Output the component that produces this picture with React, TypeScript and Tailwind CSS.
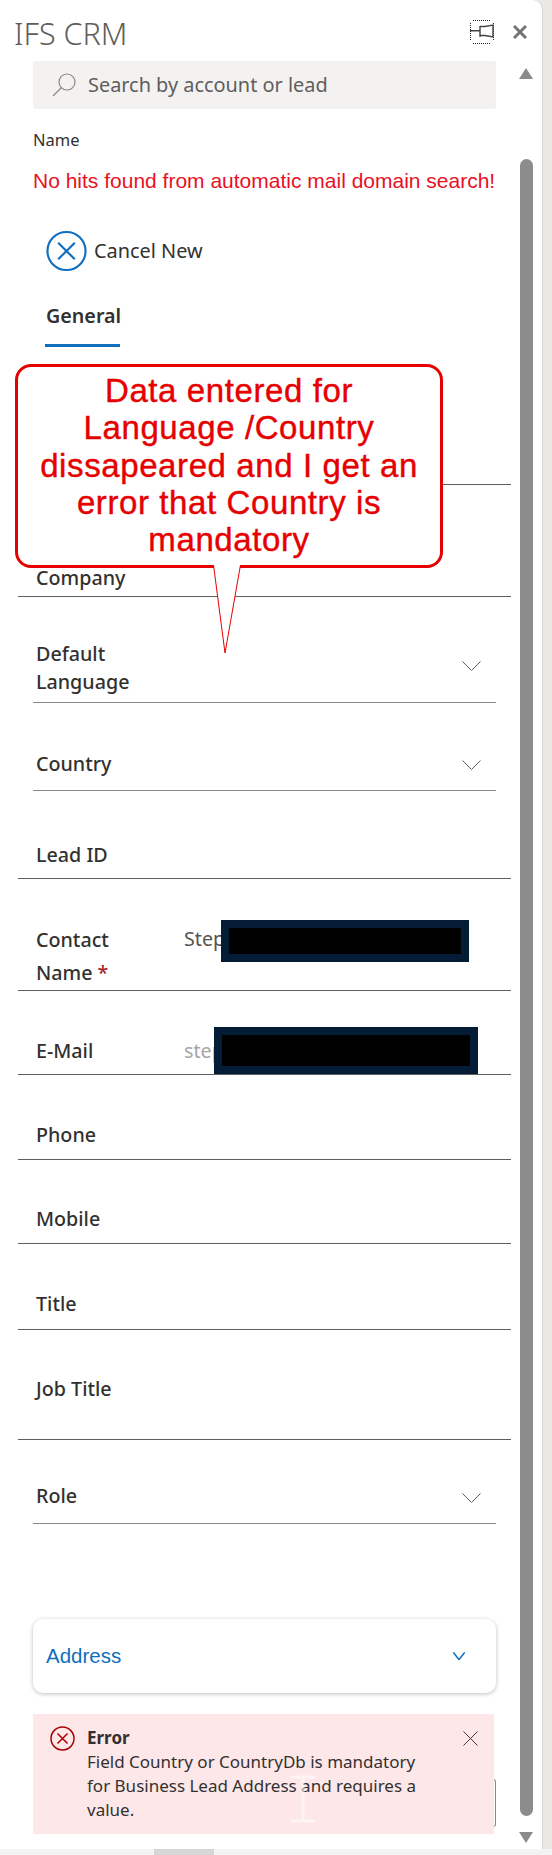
import type { ReactNode } from 'react'

function Chevron({ className, weight = 1 }: { className: string; weight?: number }) {
  return (
    <svg viewBox="0 0 19 10" preserveAspectRatio="none" className={className} fill="none" stroke="currentColor" strokeWidth={weight}>
      <path d="M0.5 0.5l9 9 9-9" />
    </svg>
  )
}

// underlined text field, full width
function Row({
  height,
  pad,
  label,
  children,
}: {
  height: string
  pad: string
  label?: ReactNode
  children?: ReactNode
}) {
  return (
    <div className={`${height} ml-[18px] flex w-[493px] items-end border-b border-[#605e5c] pl-[18px]`}>
      <div className={`${pad} w-[148px] shrink-0 text-[19.7px] leading-[28px] font-medium text-[#323130]`}>{label}</div>
      {children}
    </div>
  )
}

// dropdown field, a bit narrower than the text rows
function SelectRow({
  height,
  pad,
  chevron,
  label,
}: {
  height: string
  pad: string
  chevron: string
  label: ReactNode
}) {
  return (
    <div className={`${height} ml-[33px] flex w-[463px] items-end border-b border-[#8a8886] pl-[3px]`}>
      <div className={`${pad} text-[19.7px] leading-[28px] font-medium text-[#323130]`}>{label}</div>
      <Chevron className={`${chevron} mr-[15px] ml-auto h-[10px] w-[19px] text-[#605e5c]`} />
    </div>
  )
}

function Redacted({ className }: { className: string }) {
  return <div className={`absolute border-[8px] border-[#041c36] bg-black ${className}`} />
}

export default function App() {
  return (
    <div className='relative h-[1855px] w-[552px] overflow-hidden bg-[#ebe8e4] font-["Noto_Sans","Open_Sans",sans-serif]'>
      <div className="h-[1849px] w-[543px] rounded-tr-[10px] border-r border-[#d8d6d4] bg-white">
        <div className="flex h-[61px] items-start justify-between pt-[20px] pr-[15px] pl-[14px]">
          <span className="-mt-[3px] text-[30.5px] leading-[32px] font-light text-[#605e5c]">IFS CRM</span>
          <div className="flex items-start gap-[19px]">
            <svg viewBox="0 0 24 24" className="h-[24px] w-[24px]" fill="none">
              <path d="M3 0.5h17M3 23.5h17M0.5 3v18M23.5 3v18" stroke="#222" strokeDasharray="1 1" />
              <path d="M0 10.8h10M10 6v11M10 6.5h5l8-1.5v12l-8-1.5h-5" stroke="#444" strokeWidth="1.4" />
            </svg>
            <svg viewBox="0 0 14 14" className="mt-[5px] h-[14px] w-[14px]" stroke="#737373" strokeWidth="3">
              <path d="M1 1l12 12M13 1L1 13" />
            </svg>
          </div>
        </div>

        <div className="ml-[33px] flex h-[48px] w-[463px] items-center rounded-[2px] bg-[#f3f2f1] pl-[19px]">
          <svg viewBox="0 0 24 24" className="h-[24px] w-[24px]" fill="none" stroke="#8a8886" strokeWidth="1.2">
            <circle cx="15" cy="9" r="8" />
            <path d="M9.5 14.5L1 23" />
          </svg>
          <span className="ml-[12px] text-[19.9px] text-[#605e5c]">Search by account or lead</span>
        </div>

        <div className="mt-[21px] ml-[33px] text-[16.5px] leading-[20px] text-[#323130]">Name</div>
        <div className="mt-[19px] ml-[33px] font-['Liberation_Sans',sans-serif] text-[21px] leading-[24px] whitespace-nowrap text-[#e81123]">
          No hits found from automatic mail domain search!
        </div>

        <div className="mt-[37px] ml-[46px] flex items-center gap-[7px]">
          <svg viewBox="0 0 42 42" className="h-[42px] w-[41px]" fill="none" stroke="#106ebe" strokeWidth="2.2">
            <circle cx="21" cy="21" r="19.5" />
            <path d="M12.5 12.5l17 17M29.5 12.5l-17 17" />
          </svg>
          <span className="text-[19.9px] text-[#323130]">Cancel New</span>
        </div>

        <div className="mt-[30px] ml-[45px] w-[75px] border-b-[3px] border-[#106ebe] pb-[14px] pl-[1px] text-[19.7px] leading-[28px] font-semibold whitespace-nowrap text-[#323130]">
          General
        </div>

        <Row height="h-[138px]" pad="pb-[4px]" />
        <Row height="h-[112px]" pad="pb-[4px]" label="Company" />
        <SelectRow
          height="h-[106px]"
          pad="pb-[6px]"
          chevron="mb-[31px]"
          label={
            <>
              Default
              <br />
              Language
            </>
          }
        />
        <SelectRow height="h-[88px]" pad="pb-[12px]" chevron="mb-[20px]" label="Country" />
        <Row height="h-[88px]" pad="pb-[9px]" label="Lead ID" />
        <Row
          height="h-[112px]"
          pad="pb-[1px] leading-[33px]"
          label={
            <>
              Contact
              <br />
              Name <span className="text-[#a4262c]">*</span>
            </>
          }
        >
          <span className="pb-[37px] text-[19.7px] leading-[28px] text-[#555352]">Step</span>
        </Row>
        <Row height="h-[84px]" pad="pb-[9px]" label="E-Mail">
          <span className="pb-[9px] text-[19.7px] leading-[28px] text-[#a6a6a6]">step</span>
        </Row>
        <Row height="h-[85px]" pad="pb-[10px]" label="Phone" />
        <Row height="h-[84px]" pad="pb-[10px]" label="Mobile" />
        <Row height="h-[86px]" pad="pb-[11px]" label="Title" />
        <Row height="h-[110px]" pad="pb-[36px]" label="Job Title" />
        <SelectRow height="h-[84px]" pad="pb-[13px]" chevron="mb-[20px]" label="Role" />

        <div className="mt-[95px] ml-[33px] flex h-[74px] w-[463px] items-center justify-between rounded-[10px] bg-white pr-[31px] pl-[13px] shadow-[0_1px_4px_rgba(0,0,0,0.25)]">
          <span className="font-['Liberation_Sans',sans-serif] text-[20.5px] text-[#106ebe]">Address</span>
          <Chevron className="h-[8px] w-[12px] text-[#106ebe]" weight={2.2} />
        </div>
      </div>

      {/* scrollbar */}
      <div className="absolute top-[68px] left-[519px] h-0 w-0 border-x-[7.5px] border-b-[11px] border-x-transparent border-b-[#8a8a8a]" />
      <div className="absolute top-[159px] left-[520px] h-[1657px] w-[13px] rounded-full bg-[#8c8c8c]" />
      <div className="absolute top-[1832px] left-[519px] h-0 w-0 border-x-[7.5px] border-t-[11px] border-x-transparent border-t-[#8a8a8a]" />

      {/* redactions */}
      <Redacted className="top-[920px] left-[221px] h-[42px] w-[248px]" />
      <Redacted className="top-[1027px] left-[214px] h-[47px] w-[264px]" />

      {/* edge of whatever sits under the toast */}
      <div className="absolute top-[1779px] left-[490px] h-[48px] w-[6px] rounded-r-[3px] border-y border-r border-[#8a8886]" />

      {/* error toast */}
      <div className="absolute top-[1714px] left-[33px] flex h-[120px] w-[461px] bg-[#fde7e9] pt-[12px] pr-[16px] pl-[17px]">
        <svg viewBox="0 0 25 25" className="h-[25px] w-[25px] shrink-0" fill="none" stroke="#a80000" strokeWidth="1.5">
          <circle cx="12.5" cy="12.5" r="11.5" />
          <path d="M7.5 7.5l10 10M17.5 7.5l-10 10" />
        </svg>
        <div className="ml-[12px] w-[345px] text-[17px] leading-[24px] text-[#323130]">
          <div className="font-bold">Error</div>
          Field Country or CountryDb is mandatory for Business Lead Address and requires a value.
        </div>
        <svg viewBox="0 0 16 16" className="mt-[5px] ml-auto h-[15px] w-[15px]" stroke="#323130" strokeWidth="1">
          <path d="M0.5 0.5l15 15M15.5 0.5l-15 15" />
        </svg>
      </div>

      {/* mouse cursor */}
      <svg viewBox="0 0 28 48" className="absolute top-[1775px] left-[289px] h-[48px] w-[28px]" fill="none" stroke="#fff" strokeOpacity="0.55" strokeWidth="3">
        <path d="M2 2h24M14 2v44M2 46h24" />
      </svg>

      {/* callout */}
      <div className="absolute top-[364px] left-[15px] flex h-[204px] w-[428px] flex-col items-center rounded-[16px] border-[3px] border-[#e60000] bg-white pt-[5px] font-['Liberation_Sans',sans-serif] text-[33px] leading-[37.25px] tracking-[0.6px] whitespace-nowrap text-[#e60000] [-webkit-text-stroke:0.4px_#e60000]">
        <div>Data entered for</div>
        <div>Language /Country</div>
        <div>dissapeared and I get an</div>
        <div>error that Country is</div>
        <div>mandatory</div>
      </div>
      <svg viewBox="0 0 28 88" className="absolute top-[565px] left-[213px] h-[88px] w-[28px]" fill="#fff" stroke="#e60000">
        <path d="M0.5 0L12 88L27.5 0" />
      </svg>

      {/* bottom scrollbar */}
      <div className="absolute bottom-0 left-0 h-[6px] w-[552px] bg-[#f3f3f3]">
        <div className="ml-[154px] h-[6px] w-[60px] bg-[#d6d6d6]" />
      </div>
    </div>
  )
}
